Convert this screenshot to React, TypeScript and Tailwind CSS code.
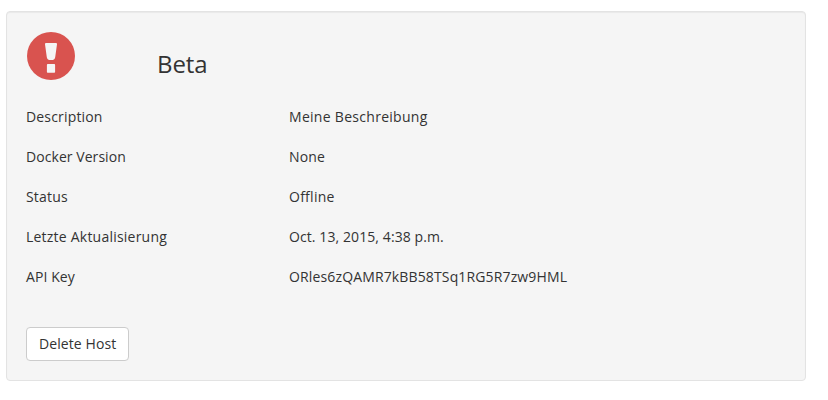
const rows = [
  { label: "Description", labelClass: "tracking-[0.17px]", value: "Meine Beschreibung", valueClass: "tracking-[0.29px]" },
  { label: "Docker Version", labelClass: "tracking-[0.06px]", value: "None", valueClass: "tracking-[0.15px]" },
  { label: "Status", labelClass: "tracking-[0.18px]", value: "Offline", valueClass: "tracking-[0.26px]" },
  { label: "Letzte Aktualisierung", labelClass: "tracking-[0.22px]", value: "Oct. 13, 2015, 4:38 p.m.", valueClass: "tracking-[0.09px]" },
  { label: "API Key", labelClass: "tracking-[0.09px]", value: "ORles6zQAMR7kBB58TSq1RG5R7zw9HML", valueClass: "tracking-[0.14px]" },
];

export default function App() {
  return (
    <div className="h-[400px] w-[828px] bg-white pt-[11px] pl-[6px] font-['Open_Sans','Noto_Sans',sans-serif] text-sm leading-5 text-[#333]">
      <main className="h-[370px] w-[800px] rounded border border-[#e3e3e3] bg-[#f5f5f5] px-[19px] pt-[19px] shadow-[inset_0_1px_1px_rgba(0,0,0,0.05)]">
        <header className="flex h-[76px]">
          <svg className="mt-px ml-px size-12 shrink-0" viewBox="0 0 48 48" aria-hidden="true">
            <circle cx="24" cy="24" r="24" fill="#d9534f" />
            <path
              fill="#f5f5f5"
              d="M19 11.1h10q1.1 0 1 1.1l-1.8 13.1q-.4 2.7-2.2 2.7h-4q-1.8 0-2.2-2.7L18 12.2q-.1-1.1 1-1.1zM20.7 32.1h6.6q.8 0 .8.8v7q0 .8-.8.8h-6.6q-.8 0-.8-.8v-7q0-.8.8-.8z"
            />
          </svg>
          <h1 className="mt-5 ml-[82px] text-2xl leading-[26px] font-normal tracking-[-0.12px]">Beta</h1>
        </header>
        <dl>
          {rows.map((row) => (
            <div key={row.label} className="flex h-10">
              <dt className={`w-[263px] ${row.labelClass}`}>{row.label}</dt>
              <dd className={row.valueClass}>{row.value}</dd>
            </div>
          ))}
        </dl>
        <button className="mt-5 h-[34px] w-[103px] rounded border border-[#ccc] bg-white px-3 text-left leading-5 whitespace-nowrap tracking-[0.09px]">
          Delete Host
        </button>
      </main>
    </div>
  );
}
